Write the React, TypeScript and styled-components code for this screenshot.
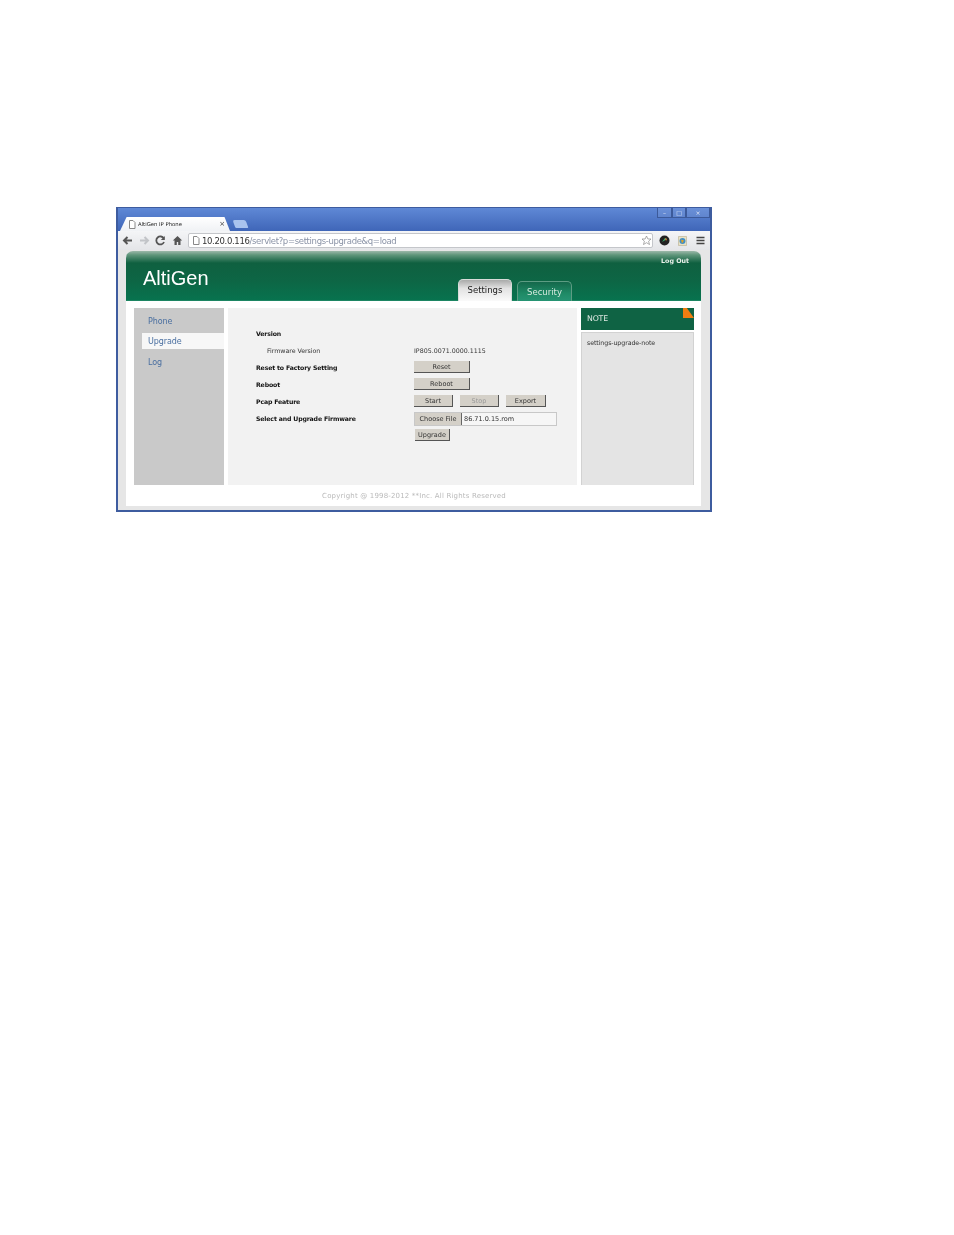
import React from "react";
import styled, { createGlobalStyle } from "styled-components";

const Global = createGlobalStyle`
  html, body { margin: 0; padding: 0; background: #fff; }
  body { font-family: "DejaVu Sans", sans-serif; }
`;

const Page = styled.div`
  width: 954px;
  height: 1235px;
  padding: 207px 0 0 116px;
  box-sizing: border-box;
  background: #fff;
`;
const Browser = styled.div`
  width: 596px;
  height: 305px;
  box-sizing: border-box;
  border: 2px solid #3e5c9f;
  border-top-width: 1px;
  display: flex;
  flex-direction: column;
  background: #e6e6e6;
  filter: blur(0.3px);
`;
const TitleBar = styled.div`
  height: 23px;
  flex: none;
  display: flex;
  align-items: flex-end;
  padding-left: 2px;
  background: linear-gradient(#5f88d6, #3f66b8);
`;
const Tab = styled.div`
  width: 110px;
  height: 14px;
  box-sizing: border-box;
  display: flex;
  align-items: center;
  gap: 2px;
  padding: 0 5px 0 8px;
  background: linear-gradient(#fff, #f0f2f5);
  clip-path: polygon(0 100%, 6% 0, 95% 0, 100% 100%);
  font: 5.300px "DejaVu Sans", sans-serif;
  color: #222;
`;
const TabTitle = styled.span`
  flex: 1;
  white-space: nowrap;
`;
const TabClose = styled.span`
  font-size: 7px;
  color: #444;
`;
const NewTab = styled.div`
  width: 13px;
  height: 8px;
  margin: 0 0 3px 4px;
  background: #a9c3ee;
  border-radius: 2px 2px 1px 1px;
  transform: skewX(20deg);
`;
const WindowControls = styled.div`
  display: flex;
  align-self: flex-start;
  margin-left: auto;
`;
const WinBtn = styled.div<{ $w: number }>`
  width: ${(p) => p.$w}px;
  height: 10px;
  box-sizing: border-box;
  border: 1px solid #3c5a9a;
  border-top: 0;
  display: flex;
  align-items: center;
  justify-content: center;
  background: rgba(255, 255, 255, 0.08);
  color: #dfe7f7;
  font: 6px "DejaVu Sans", sans-serif;
`;
const Toolbar = styled.div`
  height: 19px;
  flex: none;
  display: flex;
  align-items: center;
  padding: 0 4.500px 0 4px;
  gap: 5.500px;
  background: linear-gradient(#f4f5f7, #e4e5e8);
`;
const NavIcon = styled.svg<{ $ml?: number }>`
  width: 11px;
  height: 11px;
  flex: none;
  margin-left: ${(p) => p.$ml ?? 0}px;
`;
const Omnibox = styled.div`
  flex: 1;
  height: 15px;
  box-sizing: border-box;
  display: flex;
  align-items: center;
  gap: 2px;
  padding: 0 0 0 3px;
  background: #fff;
  border: 1px solid #c4c6ca;
  border-radius: 2px;
  font: 8.500px "DejaVu Sans", sans-serif;
  letter-spacing: -0.35px;
  color: #8a93a6;
`;
const Host = styled.span`
  color: #333;
`;
const Url = styled.span`
  flex: 1;
  white-space: nowrap;
`;
const Viewport = styled.div`
  flex: 1;
  min-height: 0;
  padding: 1px 9px 4px 8px;
  display: flex;
  flex-direction: column;
`;
const Header = styled.header`
  height: 50px;
  flex: none;
  position: relative;
  display: flex;
  align-items: flex-end;
  box-sizing: border-box;
  border-radius: 7px 7px 0 0;
  background: linear-gradient(#9cb8a9 0, #5f957a 4px, #0f6040 12px, #0d6645 30px, #07734f 100%);
  box-shadow: inset 0 -1px #1c8562;
`;
const Logo = styled.div`
  position: absolute;
  left: 17px;
  top: 16px;
  font: 20px "Liberation Sans", sans-serif;
  color: #fff;
`;
const LogOut = styled.a`
  position: absolute;
  right: 12px;
  top: 6px;
  font: bold 6.300px "DejaVu Sans", sans-serif;
  color: #e8f0ea;
`;
const Tabs = styled.nav`
  display: flex;
  align-items: flex-end;
  gap: 5px;
  margin-left: 332px;
`;
const HeaderTab = styled.div<{ $active?: boolean }>`
  width: ${(p) => (p.$active ? 54 : 55)}px;
  height: ${(p) => (p.$active ? 22 : 20)}px;
  box-sizing: border-box;
  display: flex;
  align-items: center;
  justify-content: center;
  padding-bottom: ${(p) => (p.$active ? 2 : 0)}px;
  border-radius: 5px 5px 0 0;
  border: 1px solid ${(p) => (p.$active ? "#d9dcda" : "#5d9c83")};
  border-bottom: 0;
  font: 8.500px "DejaVu Sans", sans-serif;
  color: ${(p) => (p.$active ? "#222" : "#d5eadf")};
  background: ${(p) =>
    p.$active
      ? "linear-gradient(#a9aaa9, #e2e2e2 40%, #fafafa)"
      : "linear-gradient(#14684b, #1f8a66 60%, #269473)"};
`;
const Body = styled.div`
  flex: 1;
  min-height: 0;
  display: flex;
  flex-direction: column;
  background: #fff;
  padding: 7px 7px 0 8px;
`;
const Columns = styled.div`
  height: 177px;
  flex: none;
  display: flex;
`;
const Sidebar = styled.aside`
  width: 90px;
  flex: none;
  padding-top: 5px;
  box-sizing: border-box;
  background: #c9c9c9;
  display: flex;
  flex-direction: column;
  gap: 3px;
`;
const SideItem = styled.div<{ $active?: boolean; $h: number }>`
  height: ${(p) => p.$h}px;
  display: flex;
  align-items: center;
  margin-left: 8px;
  padding-left: 6px;
  font: 8px "DejaVu Sans", sans-serif;
  letter-spacing: -0.1px;
  color: #4a6fa0;
  background: ${(p) => (p.$active ? "#f7f7f7" : "transparent")};
`;
const Main = styled.main`
  width: 349px;
  flex: none;
  margin-left: 4px;
  box-sizing: border-box;
  padding: 19px 0 0 28px;
  background: #f2f2f2;
  display: flex;
  flex-direction: column;
`;
const Row = styled.div`
  min-height: 17px;
  display: flex;
  align-items: flex-start;
`;
const Label = styled.div<{ $sub?: boolean }>`
  width: 158px;
  flex: none;
  box-sizing: border-box;
  padding-left: ${(p) => (p.$sub ? 11 : 0)}px;
  font: ${(p) => (p.$sub ? "normal 6.300px" : "bold 6.200px")}/13px "DejaVu Sans", sans-serif;
  letter-spacing: ${(p) => (p.$sub ? -0.05 : -0.15)}px;
  color: ${(p) => (p.$sub ? "#333" : "#111")};
  white-space: nowrap;
`;
const Value = styled.div`
  font: 6.300px/13px "DejaVu Sans", sans-serif;
  color: #333;
  white-space: nowrap;
`;
const Controls = styled.div`
  display: flex;
  flex-direction: column;
  align-items: flex-start;
  gap: 3px;
`;
const ButtonRow = styled.div`
  display: flex;
  gap: 7px;
`;
const Btn = styled.button<{ $w: number; $off?: boolean; $ml?: number }>`
  width: ${(p) => p.$w}px;
  height: 12px;
  margin-left: ${(p) => p.$ml ?? 0}px;
  padding: 0;
  box-sizing: border-box;
  border: 0;
  border-right: 1px solid #555;
  border-bottom: 1px solid #555;
  background: #d4d0c8;
  font: 6.500px "DejaVu Sans", sans-serif;
  color: ${(p) => (p.$off ? "#999" : "#333")};
`;
const FileBox = styled.div`
  width: 143px;
  height: 14px;
  box-sizing: border-box;
  display: flex;
  align-items: stretch;
  border: 1px solid #c8c8c8;
  background: #f6f6f6;
`;
const FileBtn = styled.div`
  width: 47px;
  box-sizing: border-box;
  display: flex;
  align-items: center;
  justify-content: center;
  background: #d4d0c8;
  border-right: 1px solid #666;
  font: 6.500px "DejaVu Sans", sans-serif;
  color: #333;
  white-space: nowrap;
`;
const FileName = styled.div`
  display: flex;
  align-items: center;
  padding-left: 2px;
  font: 6.500px "DejaVu Sans", sans-serif;
  color: #333;
`;
const NotePanel = styled.aside`
  width: 113px;
  flex: none;
  margin-left: 4px;
  display: flex;
  flex-direction: column;
`;
const NoteHead = styled.div`
  height: 22px;
  flex: none;
  position: relative;
  display: flex;
  align-items: center;
  padding: 0 0 1px 6px;
  box-sizing: border-box;
  background: #0f6344;
  font: 7.800px "DejaVu Sans", sans-serif;
  letter-spacing: -0.2px;
  color: #dfe9e3;
`;
const Corner = styled.div`
  position: absolute;
  top: 0;
  right: 0;
  width: 11px;
  height: 10px;
  background: #ee7d11;
  clip-path: polygon(0 0, 35% 0, 100% 100%, 0 100%);
`;
const NoteBody = styled.div`
  flex: 1;
  margin-top: 2px;
  box-sizing: border-box;
  padding: 6px 5px;
  background: #e4e4e4;
  border: 1px solid #d2d2d2;
  border-bottom: 0;
  font: 6.300px "DejaVu Sans", sans-serif;
  letter-spacing: -0.1px;
  color: #333;
`;
const Footer = styled.footer`
  height: 21px;
  display: flex;
  align-items: center;
  justify-content: center;
  font: 7px "DejaVu Sans", sans-serif;
  letter-spacing: 0.17px;
  color: #bababa;
`;
const DocIcon = styled.svg`
  width: 8px;
  height: 9px;
  flex: none;
`;

const Doc = () => (
  <DocIcon viewBox="0 0 8 9">
    <path d="M1.500.5h3.500l2 2v6h-5.500z" fill="#fff" stroke="#888" />
  </DocIcon>
);

export default function App() {
  return (
    <Page>
      <Global />
      <Browser>
        <TitleBar>
          <Tab>
            <Doc />
            <TabTitle>AltiGen IP Phone</TabTitle>
            <TabClose>×</TabClose>
          </Tab>
          <NewTab />
          <WindowControls>
            <WinBtn $w={15}>–</WinBtn>
            <WinBtn $w={14}>□</WinBtn>
            <WinBtn $w={24}>×</WinBtn>
          </WindowControls>
        </TitleBar>
        <Toolbar>
          <NavIcon viewBox="0 0 11 11">
            <path d="M10 5.500H3M5.500 2 2 5.500 5.500 9" fill="none" stroke="#555" strokeWidth="2" />
          </NavIcon>
          <NavIcon viewBox="0 0 11 11">
            <path d="M1 5.500h7M5.500 2 9 5.500 5.500 9" fill="none" stroke="#c2c4c8" strokeWidth="2" />
          </NavIcon>
          <NavIcon viewBox="0 0 11 11">
            <path d="M8.800 3.500A4 4 0 1 0 9 7" fill="none" stroke="#555" strokeWidth="1.800" />
            <path d="M9.800 1v4h-4z" fill="#555" />
          </NavIcon>
          <NavIcon viewBox="0 0 11 11">
            <path d="M5.500 1 .8 5.500h1.700V10h2.300V7h1.400v3h2.300V5.500h1.700z" fill="#555" />
          </NavIcon>
          <Omnibox>
            <Doc />
            <Url>
              <Host>10.20.0.116</Host>/servlet?p=settings-upgrade&amp;q=load
            </Url>
            <NavIcon viewBox="0 0 11 11">
              <path d="M5.500 1l1.400 3h3.100L7.600 6.200l.9 3.300-3-1.800-3 1.800.9-3.300L1 4h3.100z" fill="#fff" stroke="#8a8a8a" strokeWidth=".7" />
            </NavIcon>
          </Omnibox>
          <NavIcon viewBox="0 0 11 11">
            <circle cx="5.500" cy="5.500" r="5" fill="#222" />
            <path d="M3 7 6 3l2 1z" fill="#3bb273" />
            <path d="M6 3l2 1-1 2z" fill="#e9732a" />
          </NavIcon>
          <NavIcon viewBox="0 0 11 11" $ml={1.5}>
            <path d="M1.500 1.500h8v9h-8z" fill="#e9e2c4" stroke="#b5ad8e" strokeWidth=".6" />
            <circle cx="5.500" cy="6" r="3" fill="#3f8fc9" />
            <path d="M4 4.500l3 1-2 3z" fill="#e2a21f" />
          </NavIcon>
          <NavIcon viewBox="0 0 11 11" $ml={1.5}>
            <path d="M1.500 2.500h8M1.500 5.500h8M1.500 8.500h8" stroke="#444" strokeWidth="1.500" />
          </NavIcon>
        </Toolbar>
        <Viewport>
          <Header>
            <Logo>AltiGen</Logo>
            <LogOut>Log Out</LogOut>
            <Tabs>
              <HeaderTab $active>Settings</HeaderTab>
              <HeaderTab>Security</HeaderTab>
            </Tabs>
          </Header>
          <Body>
            <Columns>
              <Sidebar>
                <SideItem $h={17}>Phone</SideItem>
                <SideItem $h={16} $active>Upgrade</SideItem>
                <SideItem $h={20}>Log</SideItem>
              </Sidebar>
              <Main>
                <Row><Label>Version</Label></Row>
                <Row>
                  <Label $sub>Firmware Version</Label>
                  <Value>IP805.0071.0000.1115</Value>
                </Row>
                <Row>
                  <Label>Reset to Factory Setting</Label>
                  <Btn $w={56}>Reset</Btn>
                </Row>
                <Row>
                  <Label>Reboot</Label>
                  <Btn $w={56}>Reboot</Btn>
                </Row>
                <Row>
                  <Label>Pcap Feature</Label>
                  <ButtonRow>
                    <Btn $w={39}>Start</Btn>
                    <Btn $w={39} $off>Stop</Btn>
                    <Btn $w={40}>Export</Btn>
                  </ButtonRow>
                </Row>
                <Row>
                  <Label>Select and Upgrade Firmware</Label>
                  <Controls>
                    <FileBox>
                      <FileBtn>Choose File</FileBtn>
                      <FileName>86.71.0.15.rom</FileName>
                    </FileBox>
                    <Btn $w={35} $ml={1}>Upgrade</Btn>
                  </Controls>
                </Row>
              </Main>
              <NotePanel>
                <NoteHead>NOTE<Corner /></NoteHead>
                <NoteBody>settings-upgrade-note</NoteBody>
              </NotePanel>
            </Columns>
            <Footer>Copyright @ 1998-2012 **Inc. All Rights Reserved</Footer>
          </Body>
        </Viewport>
      </Browser>
    </Page>
  );
}
